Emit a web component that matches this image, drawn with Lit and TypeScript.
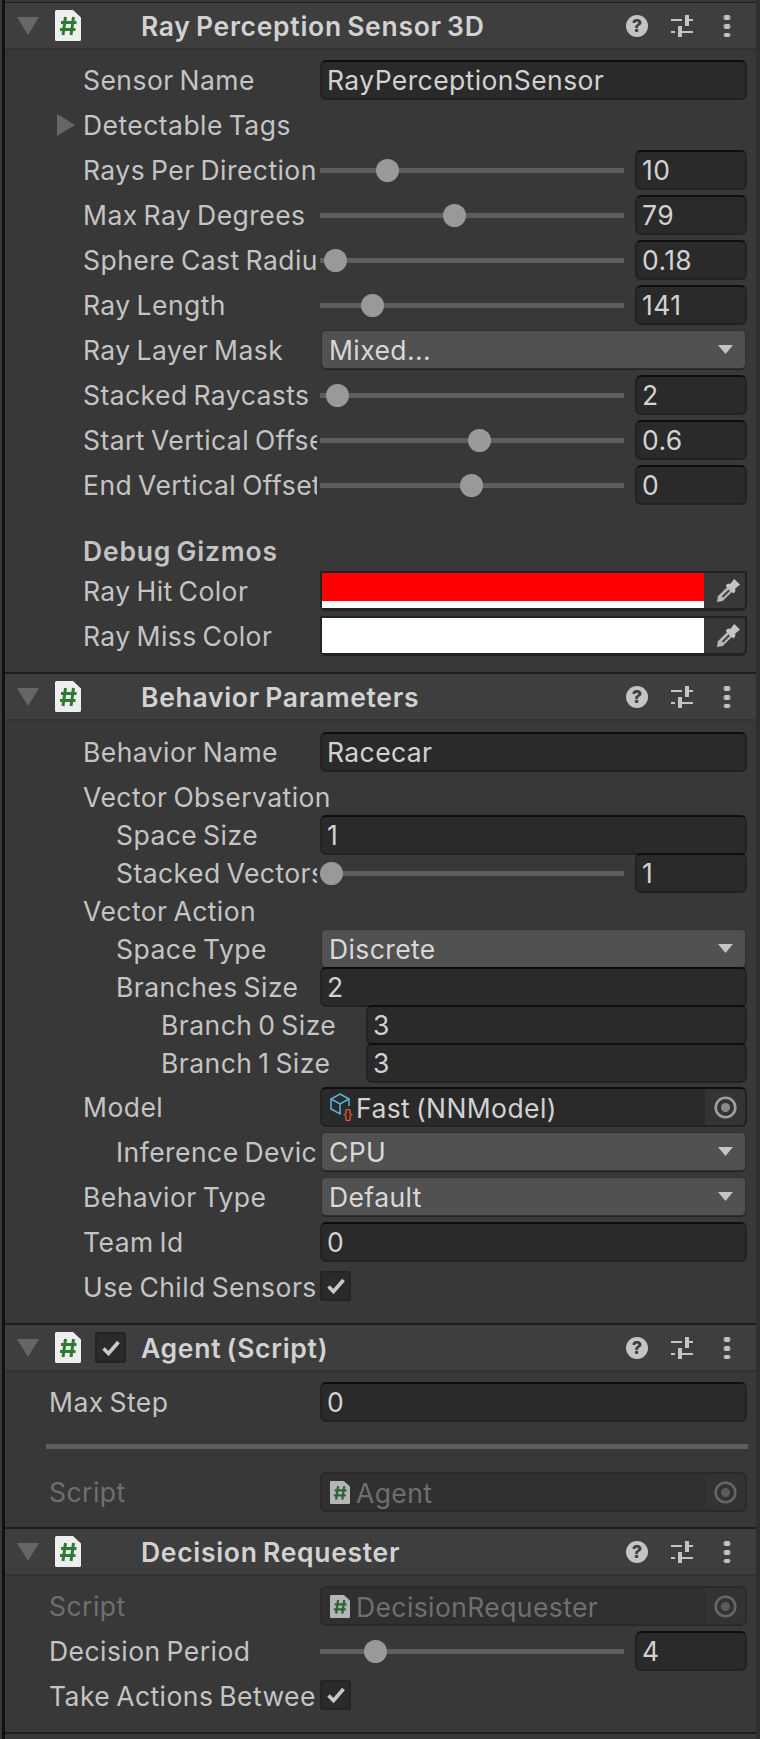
import {LitElement, html, css, svg} from 'lit';
import {customElement} from 'lit/decorators.js';

type Row = {
  kind: string;
  label?: string;
  value?: string;
  indent?: number;
  h: number;
  pos?: number;
  muted?: boolean;
  icon?: string;
  bold?: boolean;
  color?: string;
  split?: boolean;
  arrow?: boolean;
  col?: number;
};

const scriptIcon = svg`
  <path d="M1.5 0H18l8 7.500V29.500a1.500 1.500 0 0 1-1.500 1.500H1.500A1.500 1.500 0 0 1 0 29.500V1.500A1.500 1.500 0 0 1 1.500 0z" fill="#eeeeee"/>
  <path d="M10.500 7 8 25M18.500 7 16 25M6 12.500H21.500M5 19.500H20.500" stroke="#2c7a34" stroke-width="3" fill="none"/>`;

const rows1: Row[] = [
  {kind: 'text', label: 'Sensor Name', value: 'RayPerceptionSensor', h: 45},
  {kind: 'label', label: 'Detectable Tags', arrow: true, h: 45},
  {kind: 'slider', label: 'Rays Per Direction', value: '10', pos: 22, h: 45},
  {kind: 'slider', label: 'Max Ray Degrees', value: '79', pos: 44, h: 45},
  {kind: 'slider', label: 'Sphere Cast Radius', value: '0.18', pos: 5, h: 45},
  {kind: 'slider', label: 'Ray Length', value: '141', pos: 17, h: 45},
  {kind: 'select', label: 'Ray Layer Mask', value: 'Mixed...', h: 45},
  {kind: 'slider', label: 'Stacked Raycasts', value: '2', pos: 5.5, h: 45},
  {kind: 'slider', label: 'Start Vertical Offset', value: '0.6', pos: 52.300, h: 45},
  {kind: 'slider', label: 'End Vertical Offset', value: '0', pos: 49.700, h: 66},
  {kind: 'label', label: 'Debug Gizmos', bold: true, h: 40},
  {kind: 'color', label: 'Ray Hit Color', color: '#ff0000', split: true, h: 45},
  {kind: 'color', label: 'Ray Miss Color', color: '#ffffff', h: 45},
];

const rows2: Row[] = [
  {kind: 'text', label: 'Behavior Name', value: 'Racecar', h: 45},
  {kind: 'label', label: 'Vector Observation', h: 38},
  {kind: 'text', label: 'Space Size', value: '1', indent: 33, h: 38},
  {kind: 'slider', label: 'Stacked Vectors', value: '1', pos: 3.5, indent: 33, h: 38},
  {kind: 'label', label: 'Vector Action', h: 38},
  {kind: 'select', label: 'Space Type', value: 'Discrete', indent: 33, h: 38},
  {kind: 'text', label: 'Branches Size', value: '2', indent: 33, h: 38},
  {kind: 'text', label: 'Branch 0 Size', value: '3', indent: 78, col: 46, h: 38},
  {kind: 'text', label: 'Branch 1 Size', value: '3', indent: 78, col: 46, h: 44},
  {kind: 'object', label: 'Model', value: 'Fast (NNModel)', icon: 'cube', h: 45},
  {kind: 'select', label: 'Inference Device', value: 'CPU', indent: 33, h: 45},
  {kind: 'select', label: 'Behavior Type', value: 'Default', h: 45},
  {kind: 'text', label: 'Team Id', value: '0', h: 45},
  {kind: 'check', label: 'Use Child Sensors', h: 45},
];

const rows3: Row[] = [
  {kind: 'text', label: 'Max Step', value: '0', h: 45},
  {kind: 'rule', h: 45},
  {kind: 'object', label: 'Script', value: 'Agent', muted: true, icon: 'script', h: 45},
];

const rows4: Row[] = [
  {kind: 'object', label: 'Script', value: 'DecisionRequester', muted: true, icon: 'script', h: 45},
  {kind: 'slider', label: 'Decision Period', value: '4', pos: 18, h: 45},
  {kind: 'check', label: 'Take Actions Between Decisions', h: 45},
];

@customElement('app-root')
export class AppRoot extends LitElement {
  static styles = css`
    :host {
      display: block;
      width: 760px;
      height: 1739px;
      overflow: hidden;
      background: #383838;
      font-family: Inter, "Liberation Sans", sans-serif;
      font-size: 26.5px;
      letter-spacing: 0.45px;
      word-spacing: -2px;
      color: #c4c4c4;
    }
    .frame {
      height: 100%;
      box-sizing: border-box;
      margin-left: 2px;
      border-left: 3px solid #111111;
      border-right: 4px solid #2f2f2f;
      padding-top: 2px;
      background: #383838;
    }
    .frame::before {
      content: "";
      display: block;
      height: 1px;
      background: #1e1e1e;
    }
    .section {
      border-bottom: 2px solid #1e1e1e;
    }
    .head {
      height: 45px;
      display: flex;
      align-items: center;
      background: #3e3e3e;
      border-bottom: 2px solid #323232;
      font-weight: 600;
      letter-spacing: 0.7px;
      color: #d2d2d2;
    }
    .fold {
      width: 22px;
      margin-left: 12px;
      flex: none;
    }
    .doc {
      width: 26px;
      height: 31px;
      margin-left: 16px;
      flex: none;
    }
    .enable {
      width: 31px;
      height: 31px;
      margin-left: 14px;
      flex: none;
      background: #2a2a2a;
      border-radius: 3px;
      box-shadow: inset 0 0 0 2px #242424;
      display: flex;
      align-items: center;
      justify-content: center;
    }
    .title {
      flex: 1;
      margin-left: 60px;
      white-space: nowrap;
    }
    .title.checked {
      margin-left: 15px;
    }
    .tool {
      flex: none;
      display: block;
    }
    .help {
      width: 22px;
      height: 22px;
      border-radius: 50%;
      background: #c4c4c4;
      color: #3e3e3e;
      font-size: 18px;
      font-weight: 800;
      letter-spacing: 0;
      line-height: 22px;
      text-align: center;
      margin-right: 23px;
      flex: none;
    }
    .sliders {
      margin-right: 30px;
    }
    .kebab {
      margin-right: 25px;
    }
    .row {
      display: grid;
      grid-template-columns: var(--label) 1fr;
      column-gap: 3px;
      align-items: start;
      white-space: nowrap;
    }
    .label {
      position: relative;
      height: 40px;
      line-height: 40px;
      overflow: hidden;
    }
    .bold {
      font-weight: 600;
      letter-spacing: 0.8px;
    }
    .muted {
      color: #6f6f6f;
    }
    .wide {
      grid-column: 1 / 3;
      overflow: visible;
    }
    .arrow {
      position: absolute;
      margin-left: -26px;
      margin-top: 9px;
    }
    .ctl {
      height: 40px;
      margin-right: 9px;
      min-width: 0;
    }
    .field {
      height: 40px;
      box-sizing: border-box;
      background: #2a2a2a;
      border: 2px solid #222222;
      border-top-color: #0e0e0e;
      border-radius: 6px;
      padding-left: 5px;
      line-height: 37px;
      letter-spacing: 0.4px;
      color: #d2d2d2;
      overflow: hidden;
    }
    .slider {
      display: flex;
      align-items: center;
      gap: 11px;
    }
    .track {
      position: relative;
      flex: 1;
      height: 5px;
      background: #5e5e5e;
    }
    .thumb {
      position: absolute;
      top: -9px;
      width: 23px;
      height: 23px;
      margin-left: -11px;
      border-radius: 50%;
      background: #999999;
    }
    .num {
      width: 112px;
      flex: none;
    }
    .select {
      height: 37px;
      margin: 1px 11px 0 2px;
      box-sizing: border-box;
      display: flex;
      align-items: center;
      justify-content: space-between;
      background: #515151;
      border-radius: 4px;
      box-shadow: 0 0 0 1px #303030, 0 1px 0 1px #232323;
      padding: 0 12px 0 7px;
      letter-spacing: 0.4px;
      color: #d8d8d8;
    }
    .color {
      height: 40px;
      box-sizing: border-box;
      display: flex;
      background: #383838;
      border: 2px solid #222222;
      border-bottom-width: 3px;
      border-radius: 0 0 6px 6px;
    }
    .swatch {
      flex: 1;
      display: flex;
      flex-direction: column;
    }
    .swatch span {
      flex: 1;
    }
    .swatch .alpha {
      flex: none;
      height: 7px;
      background: #ffffff;
    }
    .dropper {
      width: 41px;
      box-sizing: border-box;
      flex: none;
      display: flex;
      align-items: center;
      justify-content: flex-end;
      padding-right: 4px;
    }
    .object {
      display: flex;
      align-items: center;
      padding: 0 0 0 8px;
      line-height: normal;
    }
    .object .name {
      flex: 1;
      padding-top: 2px;
    }
    .object svg {
      flex: none;
    }
    .object.muted {
      background: #303030;
      border-color: #2a2a2a;
      color: #6f6f6f;
    }
    .object.muted .name {
      margin-left: 6px;
    }
    .picker {
      width: 40px;
      height: 36px;
      display: flex;
      flex: none;
      align-items: center;
      justify-content: center;
      background: #343434;
      border-radius: 0 4px 4px 0;
      color: #a0a0a0;
    }
    .object.muted .picker {
      background: #333333;
      color: #666666;
    }
    .check {
      width: 31px;
      height: 30px;
      margin-top: 4px;
      background: #2a2a2a;
      border-radius: 3px;
      box-shadow: inset 0 0 0 2px #242424;
      display: flex;
      align-items: center;
      justify-content: center;
    }
    .rule {
      grid-column: 1 / 3;
      height: 5px;
      margin: 17px 8px 0 -3px;
      background: #5e5e5e;
    }
  `;

  checkMark() {
    return html`<svg width="20" height="18" viewBox="0 0 20 18"><path d="M2.500 9.500l5 5L17.500 3" fill="none" stroke="#c8c8c8" stroke-width="3.600"/></svg>`;
  }

  cube() {
    return html`<svg width="26" height="28" viewBox="0 0 26 28">
      <path d="M10 1 19 6V16L10 21 1 16V6zM1 6l9 5 9-5M10 11V21" fill="none" stroke="#55b4e0" stroke-width="1.500"/>
      <rect x="11" y="13" width="15" height="15" fill="#2a2a2a"/>
      <text x="12" y="25" font-size="13" fill="#ee5f2e" font-family="Liberation Mono, monospace" textLength="12">{}</text>
    </svg>`;
  }

  pickerDot() {
    return html`<svg width="23" height="23" viewBox="0 0 23 23">
      <circle cx="11.500" cy="11.500" r="9.800" fill="none" stroke="currentColor" stroke-width="2.600"/>
      <circle cx="11.500" cy="11.500" r="4.500" fill="currentColor" opacity="0.8"/>
    </svg>`;
  }

  dropper() {
    return html`<svg width="25" height="25" viewBox="0 0 26 26">
      <path d="M1 25l1-6L13 8l5 5L7 24z" fill="#b8b8b8"/>
      <path d="M6 19l7-7 1.500 1.500-7 7z" fill="#444444"/>
      <path d="M12 6l3 0 4-5 6 6-5 4 0 3-2 2-8-8z" fill="#c4c4c4"/>
    </svg>`;
  }

  control(r: Row) {
    switch (r.kind) {
      case 'text':
        return html`<div class="ctl field">${r.value}</div>`;
      case 'slider':
        return html`<div class="ctl slider">
          <div class="track"><div class="thumb" style="left:${r.pos}%"></div></div>
          <div class="field num">${r.value}</div>
        </div>`;
      case 'select':
        return html`<div class="ctl select">
          <span>${r.value}</span>
          <svg width="15" height="9" viewBox="0 0 15 9"><path d="M0 0H15L7.500 9z" fill="#c4c4c4"/></svg>
        </div>`;
      case 'color':
        return html`<div class="ctl color">
          <div class="swatch">
            <span style="background:${r.color}"></span>
            ${r.split ? html`<div class="alpha"></div>` : ''}
          </div>
          <div class="dropper">${this.dropper()}</div>
        </div>`;
      case 'object':
        return html`<div class="ctl field object ${r.muted ? 'muted' : ''}">
          ${r.icon === 'cube'
            ? this.cube()
            : html`<svg width="20" height="23" viewBox="0 0 26 31" preserveAspectRatio="none" opacity="0.7">${scriptIcon}</svg>`}
          <span class="name">${r.value}</span>
          <div class="picker">${this.pickerDot()}</div>
        </div>`;
      case 'check':
        return html`<div class="ctl"><div class="check">${this.checkMark()}</div></div>`;
      default:
        return '';
    }
  }

  row(r: Row, left: number) {
    const pad = left + (r.indent ?? 0);
    const labelWidth = 312 + (r.col ?? 0) - pad;
    const vars = `--label:${labelWidth}px;height:${r.h}px;padding-left:${pad}px`;
    if (r.kind === 'rule') {
      return html`<div class="row" style=${vars}><div class="rule"></div></div>`;
    }
    if (r.kind === 'label') {
      return html`<div class="row" style=${vars}>
        <div class="label wide ${r.bold ? 'bold' : ''}">
          ${r.arrow
            ? html`<svg class="arrow" width="18" height="22" viewBox="0 0 18 22"><path d="M0 0 18 11 0 22z" fill="#666666"/></svg>`
            : ''}${r.label}
        </div>
      </div>`;
    }
    return html`<div class="row" style=${vars}>
      <div class="label ${r.muted ? 'muted' : ''}">${r.label}</div>
      ${this.control(r)}
    </div>`;
  }

  section(title: string, rows: Row[], left: number, top: number, bottom: number, enable = false) {
    return html`<div class="section">
      <div class="head">
        <svg class="fold" height="18" viewBox="0 0 22 18"><path d="M0 0H22L11 18z" fill="#666666"/></svg>
        <svg class="doc" viewBox="0 0 26 31">${scriptIcon}</svg>
        ${enable ? html`<div class="enable">${this.checkMark()}</div>` : ''}
        <div class="title ${enable ? 'checked' : ''}">${title}</div>
        <div class="help">?</div>
        <svg class="tool sliders" width="22" height="22" viewBox="0 0 22 22">
          <path d="M0 5H11M18 5H22M0 17H4M11 17H22" stroke="#c4c4c4" stroke-width="2" fill="none"/>
          <path d="M14 0H18V11H14zM7 11H11V22H7z" fill="#c4c4c4"/>
        </svg>
        <svg class="tool kebab" width="8" height="22" viewBox="0 0 8 22">
          <path d="M0 1H8V4H0zM0 10H8V13H0zM0 19H8V21H0z" fill="#777777"/>
          <path d="M1.500 0H6.500V5H1.500zM1.500 9H6.500V14H1.500zM1.500 18H6.500V22H1.500z" fill="#c4c4c4"/>
        </svg>
      </div>
      <div style="padding:${top}px 0 ${bottom}px">${rows.map((r) => this.row(r, left))}</div>
    </div>`;
  }

  render() {
    return html`<div class="frame">
      ${this.section('Ray Perception Sensor 3D', rows1, 78, 10, 11)}
      ${this.section('Behavior Parameters', rows2, 78, 11, 11)}
      ${this.section('Agent (Script)', rows3, 44, 10, 10, true)}
      ${this.section('Decision Requester', rows4, 44, 10, 11)}
    </div>`;
  }
}
